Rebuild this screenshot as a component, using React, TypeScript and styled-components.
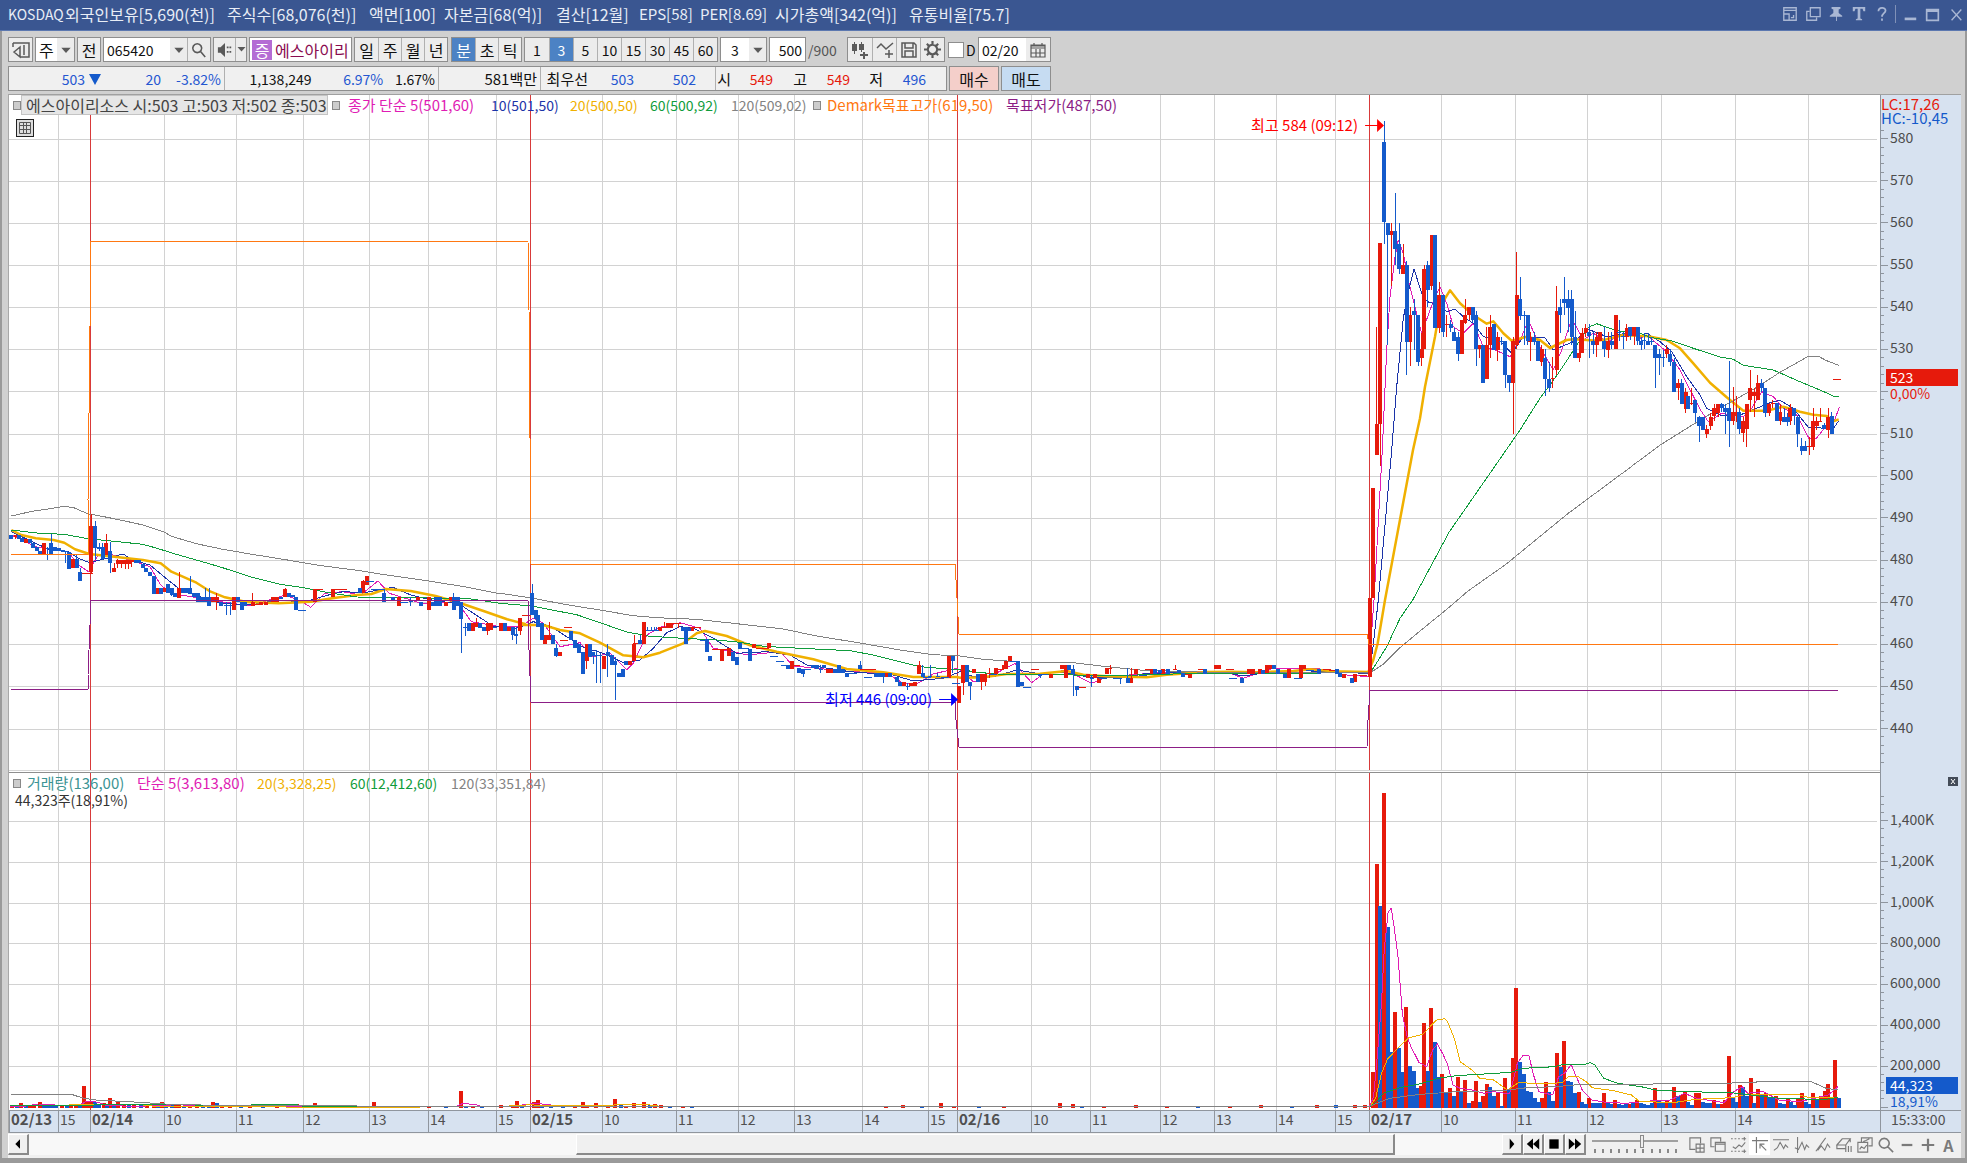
import React from "react";
import styled, { createGlobalStyle, css } from "styled-components";

/* ------------------------------------------------------------------ */
/* Chart geometry                                                      */
/* ------------------------------------------------------------------ */

const LEFT = 9;
const RIGHT = 1880;
const PRICE_TOP = 95;
const PRICE_H = 678;
const VOL_TOP = 773;
const VOL_H = 337;
const WIDTH = RIGHT - LEFT;

const RED = "#e61a0c";
const BLUE = "#145acb";
const QUOTE_BLUE = "#2456d0";
const MAGENTA = "#e01cb4";
const NAVY = "#1c34a8";
const GOLD = "#f0b000";
const GREEN = "#0f9c3c";
const GREY = "#828282";
const ORANGE = "#ff7812";
const PURPLE = "#8c1e86";

const priceY = (p: number) => 138.6 + (580 - p) * 4.214;
const volumeY = (v: number) => 1107 - v * 0.2045;

type Frame = { x: number; y: number; kx: number; ky: number };
const A: Frame = { x: 0, y: 480, kx: 2.8, ky: 3 };
const B: Frame = { x: 500, y: 540, kx: 3, ky: 3 };
const C: Frame = { x: 940, y: 600, kx: 3, ky: 3 };
const D: Frame = { x: 1340, y: 110, kx: 3, ky: 3 };
const E: Frame = { x: 1600, y: 280, kx: 3, ky: 3 };
const F: Frame = { x: 0, y: 0, kx: 0.797, ky: 0.797 };
const V: Frame = { x: 1350, y: 770, kx: 2.541, ky: 3 };
const W: Frame = { x: 0, y: 1070, kx: 2.24, ky: 3 };

const fx = (f: Frame, v: number) => f.x + v / f.kx;
const fy = (f: Frame, v: number) => f.y + v / f.ky;

function line(...parts: [Frame, string][]) {
  return parts
    .flatMap(([f, s]) =>
      s
        .trim()
        .split(/\s+/)
        .map((pt) => {
          const [x, y] = pt.split(",").map(Number);
          return `${fx(f, x).toFixed(1)},${fy(f, y).toFixed(1)}`;
        })
    )
    .join(" ");
}

/* Each candle: x,high,top,bottom,low | x,top,bottom | x,level + r/b */
function candles(parts: [Frame, string][]) {
  const out = { r: "", b: "" };
  const box = (x: number, y: number, w: number, h: number) =>
    `M${Math.round(x)} ${Math.round(y)}h${w}v${Math.max(1, Math.round(h))}h${-w}z`;
  parts.forEach(([f, s]) =>
    s
      .trim()
      .split(/\s+/)
      .forEach((c) => {
        const key = c.slice(-1) as "r" | "b";
        const n = c.slice(0, -1).split(",").map(Number);
        const x = fx(f, n[0]);
        const ys = n.slice(1).map((v) => fy(f, v));
        if (ys.length === 1) out[key] += box(x - 4, ys[0], 8, 1);
        else if (ys.length === 2) out[key] += box(x - 2, ys[0], 4, ys[1] - ys[0]);
        else
          out[key] +=
            box(x - 2, ys[1], 4, ys[2] - ys[1]) + box(x - 0.5, ys[0], 1, ys[3] - ys[0]);
      })
  );
  return out;
}

function bars(parts: [Frame, string][]) {
  const out = { r: "", b: "" };
  parts.forEach(([f, s]) =>
    s
      .trim()
      .split(/\s+/)
      .forEach((c) => {
        const key = c.slice(-1) as "r" | "b";
        const [x, y] = c.slice(0, -1).split(",").map(Number);
        const top = Math.round(fy(f, y));
        out[key] += `M${Math.round(fx(f, x) - 2)} ${top}h4V1108h-4z`;
      })
  );
  return out;
}

const CANDLES = candles([
  [
    A,
    `32,165,177b 44,165,165,170,177r 54,165,177b 62,175,188b 72,177,188r 83,177,188b 93,188,203b 103,201,213b 113,213,225b
     123,188,225r 134,200,205,208,240b 144,163,188,225,225b 155,201,212b 165,203,212b 175,210,216b 184,213,213,217,250b
     194,215,265b 205,238,265r 215,225,238,265,265b 225,265,277,305,305b 238,278r 248,278r 256,101,138,277,277r
     267,123,138,203,240b 278,190,201,206,215b 288,188,201,238,240b 298,163,188,225,225r 309,185,213,250,278b
     320,250,265,278,278r 330,238,240,252,265r 340,240,240,252,265r 350,240,240,252,268r 360,240,240,252,268r 369,240,240,246,262r
     380,240,250b 390,240,250b 400,252,265b 410,265,277b 421,277,290b 431,288,342b 441,325,342r 452,325,342b 460,325,338r
     470,313,313,340,340b 481,325,325,345,350b 491,340,352b 502,276,325,354,354r 512,325,340b 522,325,340b 533,288,325,342,342b
     543,340,352b 554,340,367b 564,352,367b 575,325,352,367,367b 586,325,352,378,378b 596,352,367r 607,340,352,367,390r
     618,365,378b 634,365,376,380,405b 644,365,375,378,405b 656,352,390r 666,352,367b 677,365,390b 687,367,378b
     708,340,365,378,378r 720,372r 731,367,375r 745,367,375r 765,352,367r 776,352,367r 787,350,357b 799,325,327,352,352r
     810,340,352b 820,345,351b 830,352,390b 845,390b 883,327,367r 893,327r 932,327,352r 944,327r 960,327r 1007,325,340b
     1017,300,303,340,340r 1027,288,315r 1037,303b 1050,327b 1066,327b 1076,327,340,367,367b 1100,352,365b 1118,352,378r 1132,365b
     1150,350,360,366,378b 1170,352,365r 1180,365,378b 1201,352,390r 1211,365,378b 1222,352,378b 1232,352,378b 1250,365,378r
     1262,352,365r 1271,340,352,390,390b 1281,352,378b 1292,367,367,417,520b 1303,428,440,443,466b 1313,428,453b 1323,430,453r
     1334,415,428,440,440r 1344,428,442b 1354,442,453b 1365,430,430,455,465r 1375,428,450r 1385,440,443b 1404,428,453r
     1414,428,453b 1425,442,455r 1436,442,442,465,480b 1446,440,462,467,490b 1457,415,415,455,465r 1474,405r`,
  ],
  [
    B,
    `97,133,160,225,225b 107,210,237b 114,225,262b 125,250,300b 136,286,312r 147,245,286,300,300r 158,286,312b 169,312,325,350,350b
     181,337,350r 192,300r 203,262r 214,273,300b 225,300,325b 236,312,340b 249,337,402b 260,312,312,362,388r 271,312,350b
     280,337,337,350,372b 290,330,346,350,430b 301,340,346,350,430b 312,348,388r 323,312,337,350,412b 335,345,375b
     346,350,362,375,478b 357,400,412b 368,387,412b 379,362,375b 390,362,375r 402,285,312,362,362r 412,310r 421,285,300,312,312b
     433,245,310r 443,262,270,274,274b 453,262,270,274,274b 462,262,270,274,274b 470,262,270,274,274b 480,262,273r
     492,245,260,264,264r 503,248,262r 514,248,262r 525,248r 536,248,248,252,262r 548,262,275b 557,262,312b 568,265,275b
     576,262,275r 590,262r 612,300b 620,297,337b 631,347,363b 648,327r 665,327,363r 676,327r 688,325,350r 699,337,363b
     710,350,375b 721,308,325b 735,325b 751,327,363b 762,312,325r 780,323r 796,325r 808,310,325r 823,348b 840,362b 854,375b
     865,375,387b 875,362,387r 887,375r 898,385,400b 909,387,387,402,412b 921,387b 940,375,385b 951,375,387b 962,375,387,390,400b
     973,375,385b 984,387,400r 995,387,400r 1006,387,400b 1017,375,400b 1028,387,400b 1040,400,412b 1060,400b 1081,362,375,387,387b
     1092,387r 1103,412b 1115,387r 1127,400,412b 1138,400,412b 1149,400,400,412,430b 1160,400,412r 1171,400,412b 1190,410,425b
     1201,425,438b 1212,425,438r 1223,430,437,440,450b 1234,430,438r 1245,425,438r 1257,362,375,402,402r 1268,375,400,412,412b
     1280,412b 1291,375,408,412,412b 1313,400,408,412,412b 1335,412b 1348,347,412r 1358,347,347,363,398b 1367,428b 1378,437,487r
     1390,375,375,428,465r 1400,375,425b 1411,425,425,438,478b 1422,387,400r`,
  ],
  [
    C,
    `113,222,247b 125,222,222,247,271r 136,222,222,247,258r 147,205,220,224,235r 158,222b 169,205,222r 180,208r 191,195,208r
     199,183,208r 211,168,183r 222,183b 234,183,260b 245,247,260b 260,260b 284,207r 300,222,222,228,235b 312,222b 334,222,233r
     367,195,208r 377,195,233r 388,195,210b 399,195,208,222,287b 410,258,258,271,287b 427,260r 444,222,233r 455,225,233,236,260b
     466,222,233r 477,233,247r 488,235b 500,205,222r 511,195,205,209,222r 530,233b 541,233,233,236,250b 563,205,233,247,247b
     574,205,233,247,247r 587,207,222r 608,225b 627,207r 635,207,222r 645,207,222b 660,210,220b 670,207,222r 683,207,222b
     705,195,206,209,209r 716,210,220b 729,220,233b 740,222r 751,222,233r 785,207r 796,207,222b 827,195,207r 838,195,207r
     870,207r 880,233b 905,233,247b 928,207,222r 938,207,222r 960,207,222r 970,210,222b 982,195,220r 992,195,207r 1002,195,207b
     1014,207,222b 1036,222,233b 1047,207,233r 1075,233b 1083,195,233r 1093,195,207r 1110,210b 1137,207,222b 1160,207r 1178,210r
     1190,207,222b 1201,220,233b 1212,222,233r 1235,233,247b 1246,222,247r 1270,224r`,
  ],
  [F, `1092,477,540r 1094,389,477r`],
  [
    D,
    `110,651,943,1035,1035r 121,400,400,943,1070r 132,33,97,338,402b 143,338,338,375,705b 155,338,362,375,528r 166,250,362,415,466b
     177,338,402,478,492b 189,402,465,492,492r 200,453,465,695,795b 211,592,615,695,770r 222,566,604,616,718b
     234,615,615,755,768b 245,670,716,744,768r 253,465,477,716,716r 263,453,465,541,592b 275,375,375,528,541r 286,375,654b
     298,515,555,654,667r 309,555,555,667,680b 320,615,641,644,680r 332,630,641,654,667b 343,655,667,694,694b 354,667,680,732,755b
     365,630,732r 376,566,616,641,641r 387,592,592,616,630r 398,592,592,630,641b 409,604,616,718,770b 418,705,705,716,744r
     430,705,819b 440,651,705,807,807r 451,615,651,705,744r 462,641,718b 473,667,680,718,755r 484,680,692,695,705b
     496,692,692,795,833b 507,795,795,819,845b 519,680,692,819,971r 530,427,555,705,718r 541,502,566,616,630b 552,604,614,617,705b
     563,615,615,692,705b 571,667,680,694,755r 583,667,680,694,705b 594,694,755b 605,705,716,755,768r 616,716,744,807,856b
     628,755,807,833,845b 638,741,805,808,833r 650,528,604,782,795r 661,566,592,616,667b 673,502,566,579,617b 684,541,566,592,667b
     695,541,566,680,705b 706,604,680,744,744b 718,680,730,744,755r 726,655,670,730,730r 737,641,655,670,680r 748,641,667,680,744b
     759,667,692,705,732b 770,667,680,705,741r 781,667,695r 793,650,694,718,741b 804,667,692,718,744r 815,667,694,705,718b
     827,615,716r 838,630,667,670,694b 849,667,678,681,718b 860,641,654,680,692r 871,652,652,680,692b 882,652,652,680,705r
     893,652,652,694,705b 904,680,692,705,718b`,
  ],
  [
    E,
    `133,160,180,184,208b 144,160,183,195,195b 155,170,183,186,195b 166,195,195,234,323b 178,208,222,234,286b 189,210,231,234,260b
     200,196,208,222,234r 211,208,222,246,258b 223,234,246,335,335b 234,297,309,323,360r 245,297,309,372,372b 257,323,335,385,398r
     264,347,385b 275,323,370,373,373r 286,360,360,398,425b 298,408,410,436,486b 309,410,448b 320,434,446,462,474r
     332,398,410,436,448r 343,372,385,410,422r 354,372,372,398,410r 365,370,372,385,398b 376,372,385,398,462b 388,243,385,425,500b
     399,322,397,425,437r 410,347,397,410,425r 418,385,397,448,462b 429,410,422,457,485r 440,372,372,448,500r 451,270,323,360,397r
     462,323,335,347,410r 473,284,308,360,360r 485,297,308,323,335b 496,323,323,398,410b 508,370,372,398,410r 518,360,370,374,385r
     530,370,425b 541,372,397,425,436r 552,385,410,425,425b 563,398,410,425,436b 571,372,385,425,436r 582,385,385,408,436b
     593,408,410,462,500b 605,474,497,511,525b 616,484,497,511,511b 628,470,497,500,525r 639,385,422,500,511r 650,410,422,436,448r
     661,385,422,425,425r 672,430,434,447,448b 684,385,410,448,474r 695,397,408,462,462b 712,296r`,
  ],
]);

const MA120 = line(
  [A, "32,108 60,101 90,94 130,88 180,79 207,83 245,101 300,112 350,123 400,135 460,156 480,169 550,191 620,207 700,222 800,239 900,257 1000,271 1070,283 1200,303 1300,320 1400,341"],
  [B, "0,160 90,173 200,194 300,210 400,227 470,233 590,238 700,250 850,267 950,288 1080,309 1200,330 1300,344"],
  [C, "0,165 45,166 130,178 240,186 400,188 500,200 600,210 700,214 800,217 1285,218 1300,212 1330,193 1380,143 1440,93"],
  [F, "1155,484 1170,471 1200,450 1250,409 1300,372"],
  [E, "100,555 184,493 280,433 350,390 430,345 470,322 540,277 600,243 625,229 655,229 680,242 716,256"]
);
const MA60 = line(
  [A, "32,150 110,160 180,163 245,176 320,184 400,193 440,205 490,222 550,240 620,262 700,290 780,312 850,323 920,338 1000,351 1200,354 1320,357 1400,370 1480,377"],
  [B, "90,197 140,207 230,224 300,248 380,276 450,289 550,295 650,300 720,307 790,319 900,325 1050,332 1120,345 1200,365 1260,380 1370,389"],
  [C, "60,208 110,217 200,224 400,225 480,228 700,222 1285,218 1300,205 1340,140 1380,55 1418,0"],
  [F, "1155,424 1180,388 1205,352"],
  [D, "540,960 570,912 600,865 650,797 700,722 745,652 770,641 790,648 830,662 880,668"],
  [E, "120,160 150,172 220,184 280,205 360,231 400,238 430,256 520,270 600,305 660,330 700,348 716,350"]
);
const MA20 = line(
  [A, "32,150 60,165 100,175 150,180 180,188 210,208 250,222 320,230 400,240 450,250 480,275 550,308 590,335 630,352 690,366 780,370 870,365 930,355 1000,345 1040,342 1080,327 1150,333 1220,348 1290,370 1360,395 1420,418 1470,432"],
  [B, "70,255 130,255 180,270 240,280 300,308 370,346 430,352 480,338 550,310 590,280 615,273 680,288 750,316 830,335 940,358 1040,387 1150,397 1240,411 1370,411"],
  [C, "60,233 130,232 200,222 300,221 380,213 430,224 500,229 620,232 680,224 800,216 870,215 950,217 1060,213 1110,208 1180,214 1285,216 1300,180 1313,130 1335,0"],
  [D, "219,1020 240,925 255,830 285,680 300,590 330,541 360,580 400,615 440,641 460,634 490,670 515,692 560,680 600,690 630,714 680,690 700,688 740,690 770,692 800,688 850,675 900,678"],
  [E, "140,168 200,180 240,205 280,250 330,308 380,352 430,392 500,392 550,380 600,395 640,404 680,408 700,424 716,418"]
);
const MA10 = line(
  [A, "32,155 90,185 140,210 190,215 220,235 250,248 300,235 345,222 370,240 420,255 470,300 500,325 560,350 620,370 700,375 780,360 850,366 920,345 960,335 1020,338 1100,322 1150,345 1230,365 1280,368 1340,410 1380,438 1440,445"],
  [B, "60,262 100,245 150,258 200,290 250,322 310,340 370,368 420,360 460,325 500,278 540,260 580,265 640,295 710,340 800,335 870,345 920,375 1050,395 1180,405 1240,423 1330,415"],
  [C, "60,215 100,230 160,230 230,210 290,220 380,218 450,232 560,232 620,220 740,218 860,218 910,228 1000,215 1080,218 1180,212 1285,222 1298,150 1315,0"],
  [D, "155,1020 170,830 190,625 205,545 222,477 245,550 262,575 300,585 320,605 345,597 370,620 400,640 430,680 480,692 515,730 550,680 615,683 640,720 700,695 745,658 800,680 860,670 900,680"],
  [E, "140,160 180,185 215,215 260,290 300,345 320,385 360,405 420,405 470,385 510,368 540,361 580,385 625,442 700,446 716,422"]
);
const MA5 = line(
  [A, "32,165 100,200 150,210 190,215 220,255 248,275 275,225 300,220 380,245 420,260 450,315 480,340 600,362 700,378 800,345 850,368 870,382 910,340 960,335 1010,345 1058,303 1090,340 1180,370 1280,365 1320,425 1400,440"],
  [B, "60,260 100,235 130,250 180,320 240,308 280,350 330,340 380,390 400,370 440,285 480,262 540,248 600,265 640,325 700,335 740,345 840,335 880,378 950,385 1060,395 1160,400 1210,430 1250,432 1300,402 1370,385"],
  [C, "60,210 100,245 140,235 225,190 250,220 275,248 310,222 380,210 420,232 455,250 500,230 700,215 860,215 910,235 1000,205 1130,205 1220,225 1285,230 1302,0"],
  [D, "127,1020 140,720 150,560 165,440 175,390 190,430 205,510 225,590 245,670 265,615 285,560 300,530 320,580 340,650 370,670 400,640 430,710 465,720 510,740 545,680 565,630 600,710 640,780 665,720 695,625 730,690 760,670 800,695 860,670 900,685"],
  [E, "140,165 200,215 240,270 300,388 325,425 365,400 430,410 455,385 485,335 520,350 550,385 590,405 628,477 650,474 680,435 700,430 718,382"]
);

const TARGET_HIGH =
  "11,554 88,554 88,500 91,241 528,241 529,310 531,564 955,564 956,580 959,634 1367,634 1369,644 1838,644";
const TARGET_LOW =
  "11,689 88,689 88,675 91,600 528,600 529,650 531,702 955,702 956,720 959,747 1367,747 1368,720 1370,690 1838,690";

const VOLUME = bars([
  [
    W,
    `28,108r 37,109b 48,100r 58,107b 68,108r 76,105r 90,96r 98,103b 107,104b 116,103b 126,107b 140,106r 150,108b 160,106r 171,101r 180,104b
     188,47r 197,92r 206,95r 213,96b 222,104b 232,98r 240,103b 247,85r 256,101b 265,96r 277,102r 290,101b 300,104r 315,102b 330,105r
     346,100r 355,101b 362,97r 372,104b 385,105b 395,101r 402,102r 412,107b 426,102r 442,101r 455,107b 468,107b 477,96r 485,99b
     498,106r 515,104r 540,108b 560,108r 590,107b 620,108r 665,103r 706,100r 740,109r 780,109b 838,97r 855,108r 900,109b 960,109r
     1000,109b 1033,63r 1044,107b 1060,108r 1080,109b 1123,104r 1148,104r 1157,93r 1170,108b 1196,97r 1204,90r 1215,108b 1235,108b
     1260,109b 1289,106r 1305,97r 1315,106r 1336,98r 1361,105r 1378,88r 1390,105b 1402,107r 1420,100r 1443,97r 1456,105b 1468,101r
     1480,106r 1500,108b 1530,109r 1550,109b`,
  ],
  [
    F,
    `706,882r 720,881r 735,882b 750,879r 760,882r 780,882b 800,882r 845,879r 855,880r 862,882b 880,882r 905,881r 930,882r 955,882b
     980,882r 1005,881r 1030,882b 1050,881r 1065,881b 1080,881r 1088,881r`,
  ],
  [
    V,
    `59,906r 68,283r 77,408b 87,70r 96,471b 105,846b 115,727r 124,835b 133,906b 143,711r 153,888b 162,903b 171,953b 180,948r
     189,760r 198,903b 207,715r 216,816b 225,921b 235,912r 245,968b 255,955r 264,977b 274,920r 283,965b 293,929r 302,1000b 312,992r
     321,933r 331,995b 338,977r 347,943r 357,950b 366,977b 376,965r 385,1007b 395,925r 404,960b 414,865r 423,655r 432,876b 441,912b
     451,962b 460,966b 470,985b 479,997b 488,985r 497,936r 506,966b 516,992b 525,849r 535,890b 544,812r 553,933b 562,936b 571,968b
     581,966r 590,997b 599,1003b 608,985r 617,1000b 627,1000b 636,1000b 646,969r 655,995b 664,1003b 674,989r 683,1003b 692,1006b
     702,1000b 711,1003r 720,1000b 729,990r 739,1000b 748,1003b 757,1006b 767,1000b 776,955r 786,989b 795,997b 805,993r 814,1000b
     823,951r 833,977b 842,975r 852,964r 860,995b 869,1006b 879,968r 888,968r 898,995b 907,1000b 916,1000b 925,989r 935,1003b
     944,1003r 954,989r 963,857r 972,985b 981,997b 990,946r 999,952b 1008,977b 1018,925r 1027,1000b 1037,958r 1046,975b 1056,968r
     1065,980b 1074,984b 1083,977r 1092,1000b 1102,1003b 1112,988r 1121,995b 1130,1006b 1139,987r 1148,969r 1158,995b 1167,1003b
     1177,969r 1186,990b 1196,977r 1206,963r 1215,943r 1224,985b 1233,869r 1242,984b`,
  ],
]);

const VMA5 = line(
  [W, "22,109 60,108 85,102 115,103 135,108 180,104 195,93 220,97 240,107 310,109 400,104 450,109 500,106 520,110 1020,110 1035,101 1065,103 1080,110 1150,108 1200,100 1240,106 1260,110 1568,110"],
  [V, "-500,1011 0,1010 50,1008 60,980 70,850 80,700 87,540 97,425 105,415 112,470 122,560 133,730 145,800 155,830 175,877 195,890 210,840 222,822 235,850 247,880 262,945 280,955 310,960 340,970 365,965 405,972 415,930 425,880 440,856 455,858 465,910 480,965 515,975 530,920 545,910 562,884 575,920 590,960 615,990 650,997 700,1000 770,992 810,992 850,970 880,985 950,998 975,965 997,950 1010,970 1050,965 1090,990 1140,995 1180,985 1215,975 1240,950"]
);
const VMA20 = line(
  [W, "22,108 140,107 160,104 300,102 340,108 640,111 940,111 1130,109 1190,104 1210,107 1450,104 1480,109 1568,109"],
  [V, "-500,1010 50,1010 65,985 80,910 95,868 125,830 150,803 185,793 205,768 220,750 240,746 248,755 265,805 280,875 310,900 330,925 365,930 400,960 430,937 480,942 540,938 555,920 580,920 600,935 615,953 670,962 715,975 735,994 820,998 880,988 970,983 1010,972 1060,975 1140,974 1170,984 1240,982"]
);
const VMA60 = line(
  [W, "22,107 180,107 240,103 370,103 500,107 590,104 665,104 680,109 1568,109"],
  [V, "-500,1010 50,1010 65,998 85,970 130,952 180,941 225,925 270,917 340,912 410,907 440,895 520,890 540,884 600,882 610,878 622,885 645,925 680,940 740,950 780,961 860,965 970,968 1040,978 1100,986 1210,988 1240,982"]
);
const VMA120 = line(
  [W, "25,72 158,72 185,84 215,90 300,96 370,102 450,105 800,108 1568,108"],
  [V, "-500,1009 50,1009 100,985 180,973 260,966 400,960 450,953 520,950 570,945 760,944 780,940 960,940 980,938 1030,937 1040,934 1170,934 1210,955 1240,960"]
);

type Tick = { x: number; label: string; day?: boolean };
const TICKS: Tick[] = [
  { x: 9, label: "02/13", day: true },
  { x: 58, label: "15" },
  { x: 90, label: "02/14", day: true },
  { x: 164, label: "10" },
  { x: 236, label: "11" },
  { x: 303, label: "12" },
  { x: 369, label: "13" },
  { x: 428, label: "14" },
  { x: 496, label: "15" },
  { x: 530, label: "02/15", day: true },
  { x: 602, label: "10" },
  { x: 676, label: "11" },
  { x: 738, label: "12" },
  { x: 794, label: "13" },
  { x: 862, label: "14" },
  { x: 928, label: "15" },
  { x: 957, label: "02/16", day: true },
  { x: 1031, label: "10" },
  { x: 1090, label: "11" },
  { x: 1160, label: "12" },
  { x: 1214, label: "13" },
  { x: 1276, label: "14" },
  { x: 1335, label: "15" },
  { x: 1369, label: "02/17", day: true },
  { x: 1441, label: "10" },
  { x: 1515, label: "11" },
  { x: 1587, label: "12" },
  { x: 1661, label: "13" },
  { x: 1735, label: "14" },
  { x: 1808, label: "15" },
];
const COLUMNS = TICKS.map((t, i) => `${(TICKS[i + 1]?.x ?? RIGHT) - t.x}fr`).join(" ");

/* ------------------------------------------------------------------ */
/* Styles                                                              */
/* ------------------------------------------------------------------ */

const Global = createGlobalStyle`
  * { box-sizing: border-box; }
  body { margin: 0; background: #d0d0d0; }
  body, button, input, select {
    font-family: "Noto Sans CJK KR", "Noto Sans", sans-serif;
    font-size: 14px;
    line-height: 20px;
  }
`;

const Window = styled.main`
  display: flex;
  flex-direction: column;
  min-height: 100vh;
  color: #111;
  background: #d0d0d0;
`;

const TitleBar = styled.header`
  display: flex;
  align-items: center;
  height: 31px;
  padding: 0 2px 2px 8px;
  color: #e8edf6;
  background: #3a5691;
  border-bottom: 1px solid #5c78b0;
  font-size: 16px;
  white-space: nowrap;
`;
const TitleItem = styled.span<{ $w: number; $size?: number }>`
  width: ${(p) => p.$w}px;
  font-size: ${(p) => p.$size ?? 16}px;
`;
const TitleIcons = styled.div`
  display: flex;
  align-items: center;
  gap: 4px;
  margin-left: auto;
`;
const TitleButton = styled.button`
  display: grid;
  place-items: center;
  width: 19px;
  height: 22px;
  padding: 0;
  border: 0;
  background: none;
  color: #a9b7d4;
`;
const Divider = styled.i`
  width: 1px;
  height: 18px;
  background: #8091b8;
`;

const Body = styled.div`
  display: flex;
  flex: 1;
  flex-direction: column;
  border: solid #9a9a9a;
  border-width: 0 2px 5px 2px;
  padding: 0 4px 0 6px;
`;

const Toolbar = styled.div`
  display: flex;
  gap: 2px;
  height: 25px;
  margin-top: 6px;
`;
const raised = css`
  border: 1px solid #8e8e8e;
`;
const Group = styled.div<{ $gap?: number }>`
  display: flex;
  margin-right: ${(p) => p.$gap ?? 0}px;
  ${raised}
`;
const Cell = styled.button<{ $w?: number; $on?: boolean; $hangul?: boolean }>`
  display: grid;
  place-items: center;
  width: ${(p) => p.$w ?? 24}px;
  padding: 0;
  border: 0;
  font-size: ${(p) => (p.$hangul ? 16 : 14)}px;
  color: ${(p) => (p.$on ? "#fff" : "#111")};
  background: ${(p) => (p.$on ? "#4c82c4" : "#ececec")};
  & + & {
    border-left: 1px solid #b0b0b0;
  }
  svg {
    color: #5a5a5a;
  }
`;
const Picker = styled.select<{ $w: number }>`
  width: ${(p) => p.$w}px;
  padding: 0 0 0 3px;
  border: 0;
  border-radius: 0;
  appearance: none;
  background: #fff;
  color: #111;
  font-size: 16px;
`;
const Field = styled.input<{ $w: number; $align?: string }>`
  width: ${(p) => p.$w}px;
  min-width: 0;
  padding: 0 3px;
  border: 0;
  background: #fff;
  color: #111;
  text-align: ${(p) => p.$align ?? "left"};
`;
const StockName = styled.div`
  display: flex;
  align-items: center;
  width: 103px;
  padding: 0 2px;
  overflow: hidden;
  white-space: nowrap;
  background: #fff;
  color: #8a0c50;
  font-size: 16px;
  ${raised}
`;
const Badge = styled.b`
  display: grid;
  place-items: center;
  width: 20px;
  height: 20px;
  margin-right: 3px;
  font-weight: 400;
  color: #fff;
  background: #b46cd4;
`;
const Plain = styled.span<{ $w: number }>`
  align-self: center;
  width: ${(p) => p.$w}px;
  color: #555;
`;
const Check = styled.label`
  display: flex;
  align-items: center;
  gap: 2px;
  width: 28px;
  input {
    appearance: none;
    flex: none;
    width: 16px;
    height: 16px;
    margin: 0;
    border: 1px solid #8e8e8e;
    background: #fff;
  }
`;

const QuoteRow = styled.div`
  display: flex;
  gap: 2px;
  height: 25px;
  margin: 4px 0 3px;
`;
const Quotes = styled.div`
  display: flex;
  align-items: stretch;
  width: 939px;
  background: #f0f0f0;
  border: 1px solid #8e8e8e;
`;
const QuoteGroup = styled.div<{ $w: number }>`
  display: flex;
  align-items: center;
  width: ${(p) => p.$w}px;
  padding-right: 3px;
  white-space: nowrap;
  & + & {
    border-left: 1px solid #b0b0b0;
  }
`;
const Quote = styled.span<{ $w: number; $c?: string; $hangul?: boolean }>`
  width: ${(p) => p.$w}px;
  color: ${(p) => p.$c ?? "#111"};
  font-size: ${(p) => (p.$hangul ? 15 : 14)}px;
  text-align: right;
`;
const Down = styled.i`
  display: inline-block;
  margin-left: 4px;
  border: solid transparent;
  border-width: 11px 6px 0;
  border-top-color: #145acb;
`;
const Trade = styled.button<{ $bg: string }>`
  width: 50px;
  padding: 0;
  border: 1px solid #8e8e8e;
  background: ${(p) => p.$bg};
  color: #111;
  font-size: 16px;
`;

const Charts = styled.section`
  display: grid;
  flex: 1;
  grid-template-columns: minmax(0, 1fr) 81px;
  grid-template-rows: ${PRICE_H}fr ${VOL_H}fr 23px;
  border-top: 1px solid #a0a0a0;
  border-left: 1px solid #a8a8a8;
  background: #fff;
`;
const Pane = styled.div`
  position: relative;
  min-width: 0;
  min-height: 0;
  overflow: hidden;
`;
const Canvas = styled.svg`
  position: absolute;
  inset: 0;
  width: 100%;
  height: 100%;
`;
const Axis = styled.div`
  position: relative;
  background: #d7e2f0;
  border-left: 1px solid #8e959e;
  color: #4c4c4c;
`;
const Legend = styled.div`
  position: relative;
  display: flex;
  align-items: center;
  height: 20px;
  padding-left: 4px;
  white-space: nowrap;
`;
const Mark = styled.i<{ $w: number }>`
  width: ${(p) => p.$w}px;
  &::before {
    content: "";
    display: block;
    width: 6px;
    height: 7px;
    border: 1px solid #888;
    background: #ccc;
  }
`;
const LegendItem = styled.span<{ $w: number; $c: string; $hangul?: boolean }>`
  width: ${(p) => p.$w}px;
  color: ${(p) => p.$c};
  font-size: ${(p) => (p.$hangul ? 15 : 14)}px;
`;
const LegendName = styled.span`
  width: 307px;
  height: 20px;
  margin-right: 4px;
  padding-left: 4px;
  line-height: 18px;
  font-size: 16px;
  color: #444;
  background: #e6e6e6;
  border: 1px solid #c4c4c4;
`;
const SubLegend = styled.div`
  position: relative;
  padding-left: 6px;
  line-height: 14px;
  color: #333;
`;
const GridButton = styled.button`
  position: relative;
  display: block;
  width: 18px;
  height: 18px;
  margin: 4px 0 0 7px;
  padding: 0;
  border: 1px solid #222;
  background: #ddd;
  svg {
    display: block;
  }
`;
const Note = styled.div<{ $c: string }>`
  position: absolute;
  display: flex;
  align-items: center;
  gap: 7px;
  color: ${(p) => p.$c};
  font-size: 15px;
  white-space: nowrap;
  transform: translate(-100%, -50%);
`;
const AxisTop = styled.div<{ $c: string }>`
  position: relative;
  height: 14px;
  line-height: 18px;
  font-size: 15px;
  color: ${(p) => p.$c};
`;
const Tag = styled.div<{ $bg: string }>`
  position: absolute;
  left: 5px;
  right: 3px;
  height: 17px;
  padding-left: 4px;
  line-height: 16px;
  color: #fff;
  background: ${(p) => p.$bg};
`;
const TagNote = styled.div<{ $c: string }>`
  position: absolute;
  left: 9px;
  line-height: 14px;
  color: ${(p) => p.$c};
`;
const CloseBox = styled.button`
  position: absolute;
  top: 4px;
  right: 3px;
  width: 10px;
  height: 9px;
  padding: 0;
  border: 0;
  background: #444c58;
  svg {
    display: block;
  }
`;

const TimeAxis = styled.div`
  display: grid;
  border-top: 1px solid #90969e;
  border-bottom: 1px solid #90969e;
  background: #d7e2f0;
`;
const TimeCell = styled.span<{ $day?: boolean }>`
  padding-left: 1px;
  border-left: 1px solid #90969e;
  color: #505050;
  font-size: ${(p) => (p.$day ? 15 : 14)}px;
  font-weight: ${(p) => (p.$day ? 700 : 400)};
  line-height: 16px;
  white-space: nowrap;
  min-width: 0;
`;
const Clock = styled.time`
  padding-left: 10px;
  border: solid #90969e;
  border-width: 1px 0 1px 1px;
  background: #d7e2f0;
  color: #505050;
  line-height: 16px;
`;

const Bottom = styled.footer`
  display: flex;
  align-items: stretch;
  height: 25px;
  padding: 1px 2px 3px 0;
  background: #f0f0f0;
`;
const Push = styled.button<{ $w: number }>`
  display: grid;
  place-items: center;
  width: ${(p) => p.$w}px;
  padding: 0;
  border: solid;
  border-width: 1px 2px 2px 1px;
  border-color: #fff #8a8a8a #8a8a8a #fff;
  background: #f0f0f0;
  color: #000;
`;
const Track = styled.div`
  display: flex;
  flex: 1;
  background: #f8f8f8;
`;
const Thumb = styled.div`
  flex: 817;
  border: solid;
  border-width: 1px 2px 2px 1px;
  border-color: #fff #8a8a8a #8a8a8a #fff;
  background: #f0f0f0;
`;
const Space = styled.i<{ $n: number }>`
  flex: ${(p) => p.$n};
`;
const Zoomer = styled.div`
  display: flex;
  flex-direction: column;
  width: 100px;
  padding: 0 6px;
  input {
    appearance: none;
    width: 86px;
    height: 14px;
    margin: 0;
    background: linear-gradient(#a0a0a0, #a0a0a0) 0 6px / 100% 2px no-repeat;
  }
  input::-webkit-slider-thumb {
    appearance: none;
    width: 4px;
    height: 13px;
    border: 1px solid #8a8a8a;
    background: #eee;
  }
`;
const Tools = styled.div`
  display: flex;
`;
const Tool = styled.button<{ $on?: boolean }>`
  display: grid;
  place-items: center;
  width: 21px;
  padding: 0;
  border: 0;
  color: #7a7a7a;
  font-size: 16px;
  background: ${(p) => (p.$on ? "#fff" : "none")};
`;

/* ------------------------------------------------------------------ */
/* Icons                                                               */
/* ------------------------------------------------------------------ */

const Ico = ({ d, size = 18, fill, w = 1.5 }: { d: string; size?: number; fill?: boolean; w?: number }) => (
  <svg
    width={size}
    height={size}
    viewBox="0 0 18 18"
    fill={fill ? "currentColor" : "none"}
    stroke={fill ? "none" : "currentColor"}
    strokeWidth={w}
    aria-hidden
  >
    <path d={d} />
  </svg>
);
const Arrow = () => <Ico fill size={14} d="M3 6h12l-6 7z" />;

const TITLE_ICONS = [
  { n: "축소", d: "M2 2h14v14H2zM2 5h14M2 9h6v7M10 13h3v-3", w: 1.5 },
  { n: "복사", d: "M6 2h11v10H6zM5 6H2v10h11v-3", w: 1.5 },
  { n: "고정", d: "M4 1h10v2l-2 1v4l4 3v1H10v5H9v-5H2v-1l4-3V4L4 3z", fill: true },
  { n: "글꼴", d: "M2 1h14v5h-2l-1-3h-2.5v11l2 1v1h-7v-1l2-1V3H5L4 6H2z", fill: true },
  { n: "도움말", d: "M5 6c0-5 8-5 8-1 0 3-4 3-4 7M9 14v2.5", w: 2 },
];

const BOTTOM_TOOLS: { n: string; d: string; w?: number; on?: boolean }[] = [
  { n: "차트 추가", d: "M7 14H1V1h12v6M8 8h9v9H8zM12.5 8v9M8 12.5h9" },
  { n: "차트 겹치기", d: "M5 11H1V1h11v4M6 6h11v10H6zM6 8h11" },
  { n: "구간", d: "M0 2h2M4 2h2M8 2h2M12 2h5M0 16h2M4 16h2M8 16h2M12 16h5M2 11l3 2 4-4 3 2 4-5M15 0v4M15 14v4", w: 1.2 },
  { n: "십자선", d: "M0 4h18M5 0v18M9 8l7 7M9 13V8h5", on: true },
  { n: "고점", d: "M0 3h18M1 15l4-3 3-6 4 7 2-4 3 3", w: 1.2 },
  { n: "수직선", d: "M4 0v18M1 12l4 2 4-8 3 8 2-5 3 3", w: 1.2 },
  { n: "추세선", d: "M1 16L12 1M3 15l4-5 4 5 3-7 3 4", w: 1.2 },
  { n: "전체 지우기", d: "M1 9l6-7h9l-5 7zM1 9v4h10V9M16 2v4M11 12v5M14 10v7M17 10v7", w: 1.3 },
  { n: "차트 이동", d: "M5 6V1h12v9h-4M1 6h11v11H1zM3 14l2-3 3 2 3-4M7 5l3-1 4-2", w: 1.3 },
  { n: "확대경", d: "M7 1.5a5.500 5.500 0 1 0 .01 0zM11 11l6 6", w: 1.8 },
  { n: "축소", d: "M3 9h12", w: 2.5 },
  { n: "확대", d: "M2 9h14M9 2v14", w: 2.5 },
];

/* ------------------------------------------------------------------ */
/* Parts                                                               */
/* ------------------------------------------------------------------ */

const GridLines = ({ ys, top, height }: { ys: number[]; top: number; height: number }) => (
  <g shapeRendering="crispEdges">
    {ys.map((y) => (
      <rect key={y} x={LEFT} y={Math.round(y)} width={WIDTH - 3} height="1" fill="#d2d2d2" />
    ))}
    {TICKS.slice(1).map((t) => (
      <rect
        key={t.x}
        x={t.x}
        y={top}
        width="1"
        height={height}
        fill={t.day ? "#d83a3a" : "#d2d2d2"}
      />
    ))}
  </g>
);

const Line = ({ pts, c, w = 1 }: { pts: string; c: string; w?: number }) => (
  <polyline
    points={pts}
    fill="none"
    stroke={c}
    strokeWidth={w}
    strokeLinejoin="round"
    shapeRendering={w === 1 ? "crispEdges" : "auto"}
  />
);

function PriceChart() {
  const ys = Array.from({ length: 15 }, (_, i) => priceY(580 - i * 10));
  return (
    <Canvas viewBox={`${LEFT} ${PRICE_TOP} ${WIDTH} ${PRICE_H}`} preserveAspectRatio="none">
      <GridLines ys={ys} top={PRICE_TOP} height={PRICE_H - 3} />
      <rect x={LEFT} y={PRICE_TOP + PRICE_H - 3} width={WIDTH} height="1" fill="#d6d6d6" />
      <rect x={LEFT} y={PRICE_TOP + PRICE_H - 1} width={WIDTH} height="1" fill="#8e8e8e" />
      <Line pts={MA5} c={MAGENTA} />
      <Line pts={MA10} c={NAVY} />
      <Line pts={MA20} c={GOLD} w={2.5} />
      <Line pts={MA60} c={GREEN} />
      <Line pts={MA120} c={GREY} />
      <path d={CANDLES.r} fill={RED} shapeRendering="crispEdges" />
      <path d={CANDLES.b} fill={BLUE} shapeRendering="crispEdges" />
      <Line pts={TARGET_HIGH} c={ORANGE} />
      <Line pts={TARGET_LOW} c={PURPLE} />
    </Canvas>
  );
}

function VolumeChart() {
  const ys = Array.from({ length: 7 }, (_, i) => volumeY(200 + i * 200));
  return (
    <Canvas viewBox={`${LEFT} ${VOL_TOP} ${WIDTH} ${VOL_H}`} preserveAspectRatio="none">
      <GridLines ys={ys} top={VOL_TOP} height={VOL_H} />
      <path d={VOLUME.r} fill={RED} shapeRendering="crispEdges" />
      <path d={VOLUME.b} fill={BLUE} shapeRendering="crispEdges" />
      <Line pts={VMA5} c={MAGENTA} />
      <Line pts={VMA20} c={GOLD} />
      <Line pts={VMA60} c={GREEN} />
      <Line pts={VMA120} c={GREY} />
    </Canvas>
  );
}

const pct = (v: number, top: number, height: number) => `${((v - top) / height) * 100}%`;

type ScaleTick = { y: number; major: boolean; label?: string };

function Scale(props: { ticks: ScaleTick[]; top: number; height: number }) {
  return (
    <Canvas>
      {props.ticks.map(({ y, major, label }) => {
        const at = pct(y, props.top, props.height);
        return (
          <g key={y}>
            <line x1="0" x2={major ? 7 : 3} y1={at} y2={at} stroke="#8e959e" shapeRendering="crispEdges" />
            {label && (
              <text x="9" y={at} dy="4" fontSize="14" fill="#4c4c4c">
                {label}
              </text>
            )}
          </g>
        );
      })}
    </Canvas>
  );
}

/* The label under the current-price tag is left out. */
const PRICE_TICKS: ScaleTick[] = Array.from({ length: 77 }, (_, i) => 582 - i * 2)
  .filter((p) => priceY(p) < 770)
  .map((p) => ({
    y: priceY(p),
    major: p % 10 === 0,
    label: p % 10 === 0 && p >= 440 && p !== 520 ? String(p) : undefined,
  }));
const VOLUME_TICKS: ScaleTick[] = Array.from({ length: 39 }, (_, i) => i * 40).map((v) => ({
  y: volumeY(v),
  major: v % 200 === 0,
  label:
    v > 0 && v % 200 === 0
      ? v >= 1000
        ? `${(v / 1000).toFixed(1).replace(".", ",")}00K`
        : `${v},000`
      : undefined,
}));

const Pointer = () => (
  <svg width="19" height="13" viewBox="0 0 19 13" aria-hidden>
    <path d="M0 6h12V0l7 6.500L12 13V7H0z" fill="currentColor" />
  </svg>
);

/* ------------------------------------------------------------------ */
/* Window                                                              */
/* ------------------------------------------------------------------ */

export default function App() {
  return (
    <Window>
      <Global />
      <TitleBar>
        <TitleItem $w={57} $size={14}>
          KOSDAQ
        </TitleItem>
        <TitleItem $w={162}>외국인보유[5,690(천)]</TitleItem>
        <TitleItem $w={142}>주식수[68,076(천)]</TitleItem>
        <TitleItem $w={75}>액면[100]</TitleItem>
        <TitleItem $w={112}>자본금[68(억)]</TitleItem>
        <TitleItem $w={83}>결산[12월]</TitleItem>
        <TitleItem $w={61} $size={15}>
          EPS[58]
        </TitleItem>
        <TitleItem $w={75} $size={15}>
          PER[8.69]
        </TitleItem>
        <TitleItem $w={134}>시가총액[342(억)]</TitleItem>
        <TitleItem $w={110}>유통비율[75.7]</TitleItem>
        <TitleIcons>
          {TITLE_ICONS.map((i) => (
            <TitleButton key={i.n} aria-label={i.n}>
              <Ico d={i.d} fill={i.fill} w={i.w} size={16} />
            </TitleButton>
          ))}
          <Divider />
          <TitleButton aria-label="최소화">
            <Ico d="M3 13h13v3H3z" fill size={16} />
          </TitleButton>
          <TitleButton aria-label="최대화">
            <Ico d="M2 3h14v13H2zM2 5h14" size={15} w={2} />
          </TitleButton>
          <TitleButton aria-label="닫기">
            <Ico d="M4 4l11 12M15 4L4 16" size={16} />
          </TitleButton>
        </TitleIcons>
      </TitleBar>

      <Body>
        <Toolbar>
          <Group>
            <Cell $w={23} aria-label="패널">
              <Ico d="M1 2h16v14H8M12 4v10M1 2v4M2 11l6-5v10z" />
            </Cell>
          </Group>
          <Group>
            <Picker $w={21} aria-label="종류">
              <option>주</option>
            </Picker>
            <Cell $w={17} aria-label="종류 열기">
              <Arrow />
            </Cell>
          </Group>
          <Group>
            <Cell $w={22} $hangul>
              전
            </Cell>
          </Group>
          <Group>
            <Field $w={66} defaultValue="065420" aria-label="종목코드" />
            <Cell $w={17} aria-label="종목 목록">
              <Arrow />
            </Cell>
            <Cell $w={23} aria-label="검색">
              <Ico d="M7 2a5 5 0 1 0 .01 0zM11 11l5 6" w={1.8} size={16} />
            </Cell>
          </Group>
          <Group>
            <Cell $w={21} aria-label="소리">
              <Ico fill size={16} d="M1 6h3l5-5v16l-5-5H1zM11 5h2v2h-2zM14 5h2v2h-2zM11 10h2v2h-2zM14 10h2v2h-2z" />
            </Cell>
            <Cell $w={11} aria-label="소리 설정">
              <Ico fill size={9} d="M1 4h16l-8 9z" />
            </Cell>
          </Group>
          <StockName>
            <Badge>증</Badge>에스아이리
          </StockName>
          <Group $gap={1}>
            {["일", "주", "월", "년"].map((t) => (
              <Cell key={t} $w={23} $hangul>
                {t}
              </Cell>
            ))}
          </Group>
          <Group>
            {["분", "초", "틱"].map((t) => (
              <Cell key={t} $w={23} $on={t === "분"} $hangul>
                {t}
              </Cell>
            ))}
          </Group>
          <Group>
            {["1", "3", "5", "10", "15", "30", "45", "60"].map((t) => (
              <Cell key={t} $on={t === "3"}>
                {t}
              </Cell>
            ))}
          </Group>
          <Group>
            <Field $w={28} $align="center" defaultValue="3" aria-label="간격" />
            <Cell $w={17} aria-label="간격 열기">
              <Arrow />
            </Cell>
          </Group>
          <Group>
            <Field $w={35} $align="right" defaultValue="500" aria-label="봉 수" />
          </Group>
          <Plain $w={37}>/900</Plain>
          <Group $gap={1}>
            <Cell aria-label="봉 추가">
              <Ico fill d="M1 3h2V1h1v2h2v7H4v3H3v-3H1zM8 3h2V1h1v2h2v6h-2v2h-1V9H8zM12 11h2v2h3v2h-3v3h-2v-3H9v-2h3z" />
            </Cell>
            <Cell aria-label="지표 추가">
              <Ico d="M1 7l4-4 5 5 7-6M13 9v8M9 13h8" />
            </Cell>
            <Cell aria-label="저장">
              <Ico d="M2 2h12l2 2v12H2zM5 2v5h8V2M5 16v-6h8v6" />
            </Cell>
            <Cell aria-label="설정">
              <Ico size={17} d="M9 4a5 5 0 1 0 .01 0zM9 0v4M9 14v4M0 9h4M14 9h4M3 3l3 3M12 12l3 3M15 3l-3 3M3 15l3-3" w={2.3} />
            </Cell>
          </Group>
          <Check>
            <input type="checkbox" />D
          </Check>
          <Group>
            <Field $w={47} defaultValue="02/20" aria-label="날짜" />
            <Cell aria-label="달력">
              <Ico d="M2 4h14v12H2zM2 5h14M2 7h14M5 2v3M13 2v3M7 8v8M11 8v8M2 12h14" w={1.2} />
            </Cell>
          </Group>
        </Toolbar>

        <QuoteRow>
          <Quotes>
            <QuoteGroup $w={215}>
              <Quote $w={92} $c={QUOTE_BLUE}>
                503
                <Down />
              </Quote>
              <Quote $w={60} $c={QUOTE_BLUE}>
                20
              </Quote>
              <Quote $w={60} $c={QUOTE_BLUE}>
                -3.82%
              </Quote>
            </QuoteGroup>
            <QuoteGroup $w={214}>
              <Quote $w={87}>1,138,249</Quote>
              <Quote $w={72} $c={QUOTE_BLUE}>
                6.97%
              </Quote>
              <Quote $w={52}>1.67%</Quote>
            </QuoteGroup>
            <QuoteGroup $w={102}>
              <Quote $w={99} $hangul>
                581백만
              </Quote>
            </QuoteGroup>
            <QuoteGroup $w={175}>
              <Quote $w={47} $hangul>
                최우선
              </Quote>
              <Quote $w={46} $c={QUOTE_BLUE}>
                503
              </Quote>
              <Quote $w={62} $c={QUOTE_BLUE}>
                502
              </Quote>
            </QuoteGroup>
            <QuoteGroup $w={231}>
              <Quote $w={15} $hangul>
                시
              </Quote>
              <Quote $w={42} $c={RED}>
                549
              </Quote>
              <Quote $w={34} $hangul>
                고
              </Quote>
              <Quote $w={43} $c={RED}>
                549
              </Quote>
              <Quote $w={33} $hangul>
                저
              </Quote>
              <Quote $w={43} $c={QUOTE_BLUE}>
                496
              </Quote>
            </QuoteGroup>
          </Quotes>
          <Trade $bg="#f4cfca">매수</Trade>
          <Trade $bg="#c6dcf2">매도</Trade>
        </QuoteRow>

        <Charts>
          <Pane>
            <PriceChart />
            <Legend>
              <Mark $w={8} />
              <LegendName>에스아이리소스 시:503 고:503 저:502 종:503</LegendName>
              <Mark $w={16} />
              <LegendItem $w={143} $c={MAGENTA} $hangul>
                종가 단순 5(501,60)
              </LegendItem>
              <LegendItem $w={79} $c={NAVY}>
                10(501,50)
              </LegendItem>
              <LegendItem $w={80} $c={GOLD}>
                20(500,50)
              </LegendItem>
              <LegendItem $w={81} $c={GREEN}>
                60(500,92)
              </LegendItem>
              <LegendItem $w={82} $c={GREY}>
                120(509,02)
              </LegendItem>
              <Mark $w={14} />
              <LegendItem $w={179} $c={ORANGE} $hangul>
                Demark목표고가(619,50)
              </LegendItem>
              <LegendItem $w={120} $c={PURPLE} $hangul>
                목표저가(487,50)
              </LegendItem>
            </Legend>
            <GridButton aria-label="표 보기">
              <svg width="16" height="16" viewBox="0 0 16 16">
                <path d="M2.500 2.500h11v11h-11zM2.500 5.500h11M2.500 9.500h11M6.500 2.500v11M9.500 2.500v11" fill="none" stroke="#555" />
              </svg>
            </GridButton>
            <Note
              $c="#f00"
              style={{ left: pct(1384, LEFT, WIDTH), top: pct(125, PRICE_TOP, PRICE_H) }}
            >
              최고 584 (09:12)
              <Pointer />
            </Note>
            <Note
              $c="#00f"
              style={{ left: pct(958, LEFT, WIDTH), top: pct(699, PRICE_TOP, PRICE_H) }}
            >
              최저 446 (09:00)
              <Pointer />
            </Note>
          </Pane>
          <Axis>
            <Scale ticks={PRICE_TICKS} top={PRICE_TOP} height={PRICE_H} />
            <AxisTop $c={RED}>LC:17,26</AxisTop>
            <AxisTop $c={BLUE}>HC:-10,45</AxisTop>
            <Tag $bg={RED} style={{ top: pct(369, PRICE_TOP, PRICE_H) }}>
              523
            </Tag>
            <TagNote $c={RED} style={{ top: pct(386, PRICE_TOP, PRICE_H) }}>
              0,00%
            </TagNote>
          </Axis>

          <Pane>
            <VolumeChart />
            <Legend>
              <Mark $w={14} />
              <LegendItem $w={110} $c="#3c9494" $hangul>
                거래량(136,00)
              </LegendItem>
              <LegendItem $w={120} $c={MAGENTA} $hangul>
                단순 5(3,613,80)
              </LegendItem>
              <LegendItem $w={93} $c={GOLD}>
                20(3,328,25)
              </LegendItem>
              <LegendItem $w={101} $c={GREEN}>
                60(12,412,60)
              </LegendItem>
              <LegendItem $w={110} $c={GREY}>
                120(33,351,84)
              </LegendItem>
            </Legend>
            <SubLegend>44,323주(18,91%)</SubLegend>
          </Pane>
          <Axis>
            <Scale ticks={VOLUME_TICKS} top={VOL_TOP} height={VOL_H} />
            <CloseBox aria-label="지표 닫기">
              <svg width="10" height="9" viewBox="0 0 10 9">
                <path d="M3 2l4 5M7 2L3 7" stroke="#fff" />
              </svg>
            </CloseBox>
            <Tag $bg={BLUE} style={{ top: pct(1077, VOL_TOP, VOL_H) }}>
              44,323
            </Tag>
            <TagNote $c={BLUE} style={{ top: pct(1094, VOL_TOP, VOL_H) }}>
              18,91%
            </TagNote>
          </Axis>

          <TimeAxis style={{ gridTemplateColumns: COLUMNS }}>
            {TICKS.map((t) => (
              <TimeCell key={t.x} $day={t.day}>
                {t.label}
              </TimeCell>
            ))}
          </TimeAxis>
          <Clock>15:33:00</Clock>
        </Charts>

        <Bottom>
          <Track>
            <Push $w={21} aria-label="왼쪽으로">
              <Ico fill size={12} d="M12 2v14L5 9z" />
            </Push>
            <Space $n={548} />
            <Thumb />
            <Space $n={107} />
          </Track>
          {[
            ["재생", "M6 2v14l6-7z"],
            ["뒤로", "M9 2v14L1 9zM17 2v14L9 9z"],
            ["정지", "M3 3h12v12H3z"],
            ["앞으로", "M1 2v14l8-7zM9 2v14l8-7z"],
          ].map(([n, d]) => (
            <Push key={n} $w={21} aria-label={n}>
              <Ico fill size={14} d={d} />
            </Push>
          ))}
          <Zoomer>
            <input type="range" min="0" max="100" defaultValue="58" aria-label="배율" />
            <svg width="86" height="6" viewBox="0 0 86 6" aria-hidden>
              <path d="M3 1v4M11 1v4M19 1v4M27 1v4M35 1v4M43 1v4M51 1v4M60 1v4M68 1v4M76 1v4M84 1v4" stroke="#222" />
            </svg>
          </Zoomer>
          <Tools>
            {BOTTOM_TOOLS.map((t) => (
              <Tool key={t.n} $on={t.on} aria-label={t.n}>
                <Ico d={t.d} w={t.w ?? 1.3} size={16} />
              </Tool>
            ))}
            <Tool>
              <b>A</b>
            </Tool>
          </Tools>
        </Bottom>
      </Body>
    </Window>
  );
}
